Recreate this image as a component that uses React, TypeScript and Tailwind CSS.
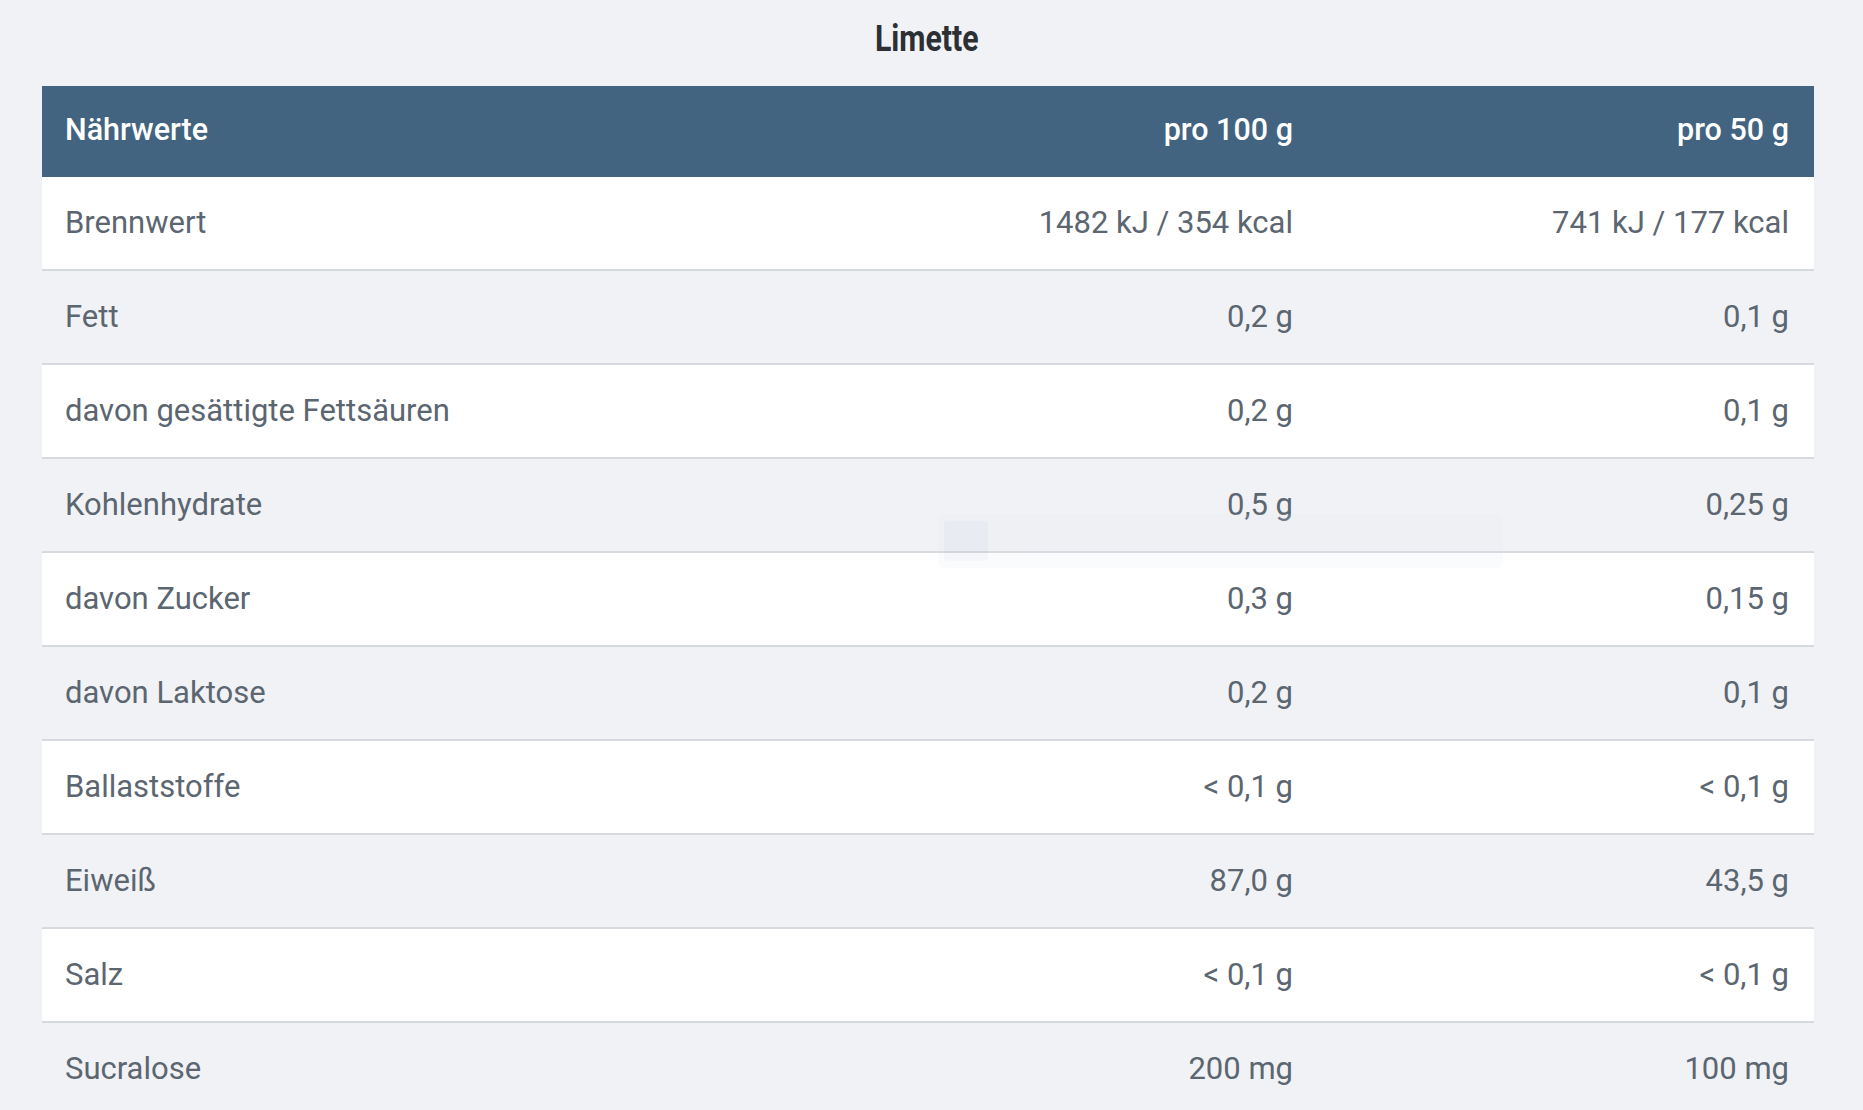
import React from "react";

const rows: [string, string, string][] = [
  ["Brennwert", "1482 kJ / 354 kcal", "741 kJ / 177 kcal"],
  ["Fett", "0,2 g", "0,1 g"],
  ["davon gesättigte Fettsäuren", "0,2 g", "0,1 g"],
  ["Kohlenhydrate", "0,5 g", "0,25 g"],
  ["davon Zucker", "0,3 g", "0,15 g"],
  ["davon Laktose", "0,2 g", "0,1 g"],
  ["Ballaststoffe", "< 0,1 g", "< 0,1 g"],
  ["Eiweiß", "87,0 g", "43,5 g"],
  ["Salz", "< 0,1 g", "< 0,1 g"],
  ["Sucralose", "200 mg", "100 mg"],
];

export default function App() {
  return (
    <div
      className="relative w-[1863px] h-[1110px] overflow-hidden bg-[#f1f2f5]"
      style={{ fontFamily: "Roboto, 'Liberation Sans', sans-serif" }}
    >
      <div className="h-[86px] pt-[21px] pr-[10px] flex justify-center">
        <div className="text-[36px] leading-none font-bold text-[#2c2f34] scale-x-[0.84] origin-center">
          Limette
        </div>
      </div>
      <div className="ml-[42px] w-[1772px]">
        <div className="flex items-center h-[91px] pb-[3px] bg-[#426480] text-white font-medium text-[30.5px] leading-none">
          <div className="flex-1 pl-[23px]">Nährwerte</div>
          <div className="w-[500px] text-right pr-[25px]">pro 100 g</div>
          <div className="w-[496px] text-right pr-[25px]">pro 50 g</div>
        </div>
        {rows.map((r, i) => (
          <div
            key={r[0]}
            className={
              "flex items-center h-[94px] pb-[2px] border-b-2 border-[#d6d9dd] text-[31px] leading-none text-[#5b6671] " +
              (i % 2 === 0 ? "bg-white" : "bg-[#f1f2f5]")
            }
          >
            <div className="flex-1 pl-[23px]">{r[0]}</div>
            <div className="w-[500px] text-right pr-[25px]">{r[1]}</div>
            <div className="w-[496px] text-right pr-[25px]">{r[2]}</div>
          </div>
        ))}
      </div>
      <div className="absolute left-[938px] top-[514px] w-[565px] h-[54px] rounded-md bg-[#dfe6f0] opacity-15 flex items-center pl-[6px] gap-[20px]">
        <div className="w-[44px] h-[40px] rounded bg-[#b8c8dc]" />
      </div>
    </div>
  );
}
